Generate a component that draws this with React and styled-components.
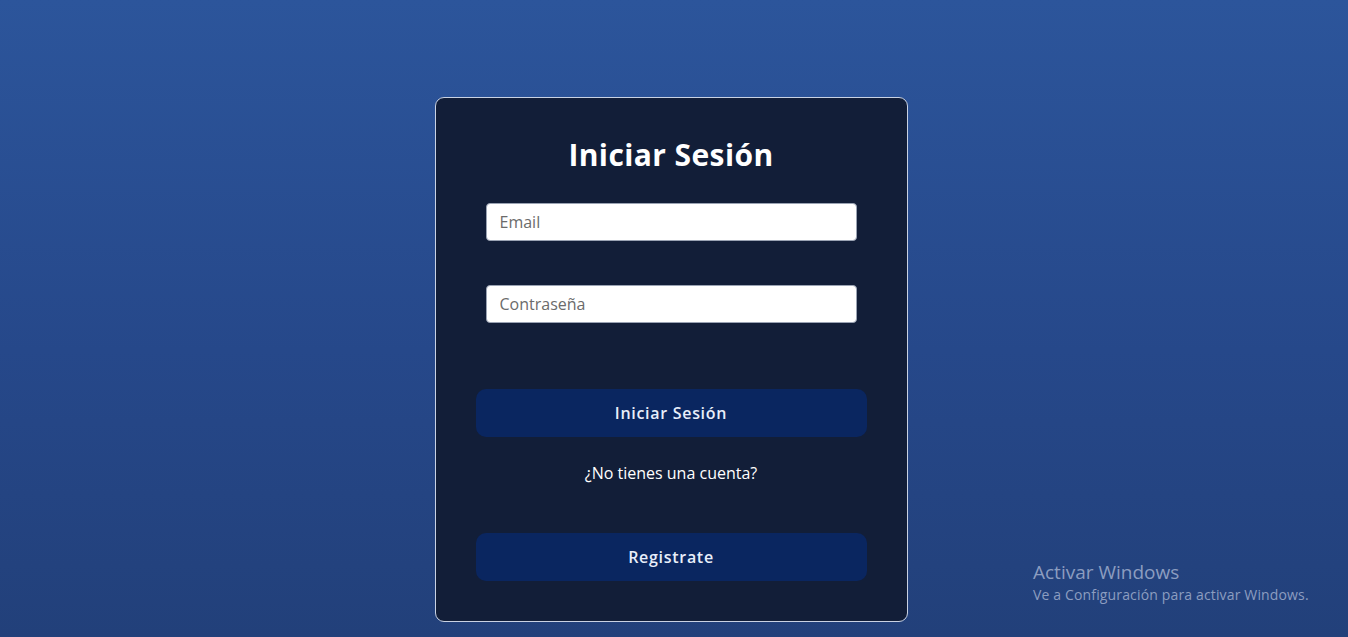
import React from "react";
import styled, { createGlobalStyle } from "styled-components";

const GlobalStyle = createGlobalStyle`
  html, body {
    margin: 0;
    padding: 0;
  }
  body {
    font-family: "Open Sans", "Noto Sans", sans-serif;
    background: linear-gradient(180deg, #2c559b 0%, #26488a 55%, #22407a 100%);
    min-height: 637px;
    overflow: hidden;
  }
`;

const Page = styled.div`
  position: relative;
  height: 637px;
  display: flex;
  justify-content: center;
  align-items: flex-start;
  padding-top: 97px;
  padding-right: 6px;
  box-sizing: border-box;
`;

const Card = styled.form`
  width: 473px;
  height: 525px;
  box-sizing: border-box;
  background: #121e38;
  border: 1px solid #c9d2e3;
  border-radius: 9px;
  padding: 37px 40px 0;
  display: flex;
  flex-direction: column;
  align-items: center;
`;

const Title = styled.h1`
  margin: 0;
  font-size: 30px;
  line-height: 40px;
  font-weight: 700;
  color: #ffffff;
  letter-spacing: 0.4px;
`;

const Input = styled.input`
  width: 371px;
  height: 38px;
  box-sizing: border-box;
  margin-top: ${(p) => p.$mt}px;
  border: 1px solid #9aa3b3;
  border-radius: 4px;
  background: #ffffff;
  padding: 0 13px;
  font-family: "Open Sans", "Noto Sans", sans-serif;
  font-size: 16px;
  color: #333;
  outline: none;
  &::placeholder {
    color: #6b6b6b;
  }
`;

const Button = styled.button`
  width: 391px;
  height: 48px;
  margin-top: ${(p) => p.$mt}px;
  border: none;
  border-radius: 10px;
  background: #0a2660;
  color: #e8eefa;
  font-family: "Open Sans", "Noto Sans", sans-serif;
  font-size: 16px;
  font-weight: 600;
  letter-spacing: 0.7px;
  cursor: pointer;
`;

const Prompt = styled.p`
  margin: 24px 0 0;
  line-height: 24px;
  font-size: 16px;
  color: #ffffff;
  letter-spacing: 0;
`;

const Watermark = styled.div`
  position: absolute;
  left: 1033px;
  top: 560px;
  color: #8c9dc0;
  font-family: "Open Sans", "Noto Sans", sans-serif;
`;

const WatermarkTitle = styled.div`
  font-size: 19px;
  line-height: 24px;
`;

const WatermarkText = styled.div`
  font-size: 14px;
  line-height: 22px;
  letter-spacing: 0.15px;
`;

export default function App() {
  return (
    <>
      <GlobalStyle />
      <Page>
        <Card onSubmit={(e) => e.preventDefault()}>
          <Title>Iniciar Sesión</Title>
          <Input $mt={28} type="email" placeholder="Email" />
          <Input $mt={44} type="password" placeholder="Contraseña" />
          <Button $mt={66} type="submit">Iniciar Sesión</Button>
          <Prompt>¿No tienes una cuenta?</Prompt>
          <Button $mt={48} type="button">Registrate</Button>
        </Card>
        <Watermark>
          <WatermarkTitle>Activar Windows</WatermarkTitle>
          <WatermarkText>Ve a Configuración para activar Windows.</WatermarkText>
        </Watermark>
      </Page>
    </>
  );
}
